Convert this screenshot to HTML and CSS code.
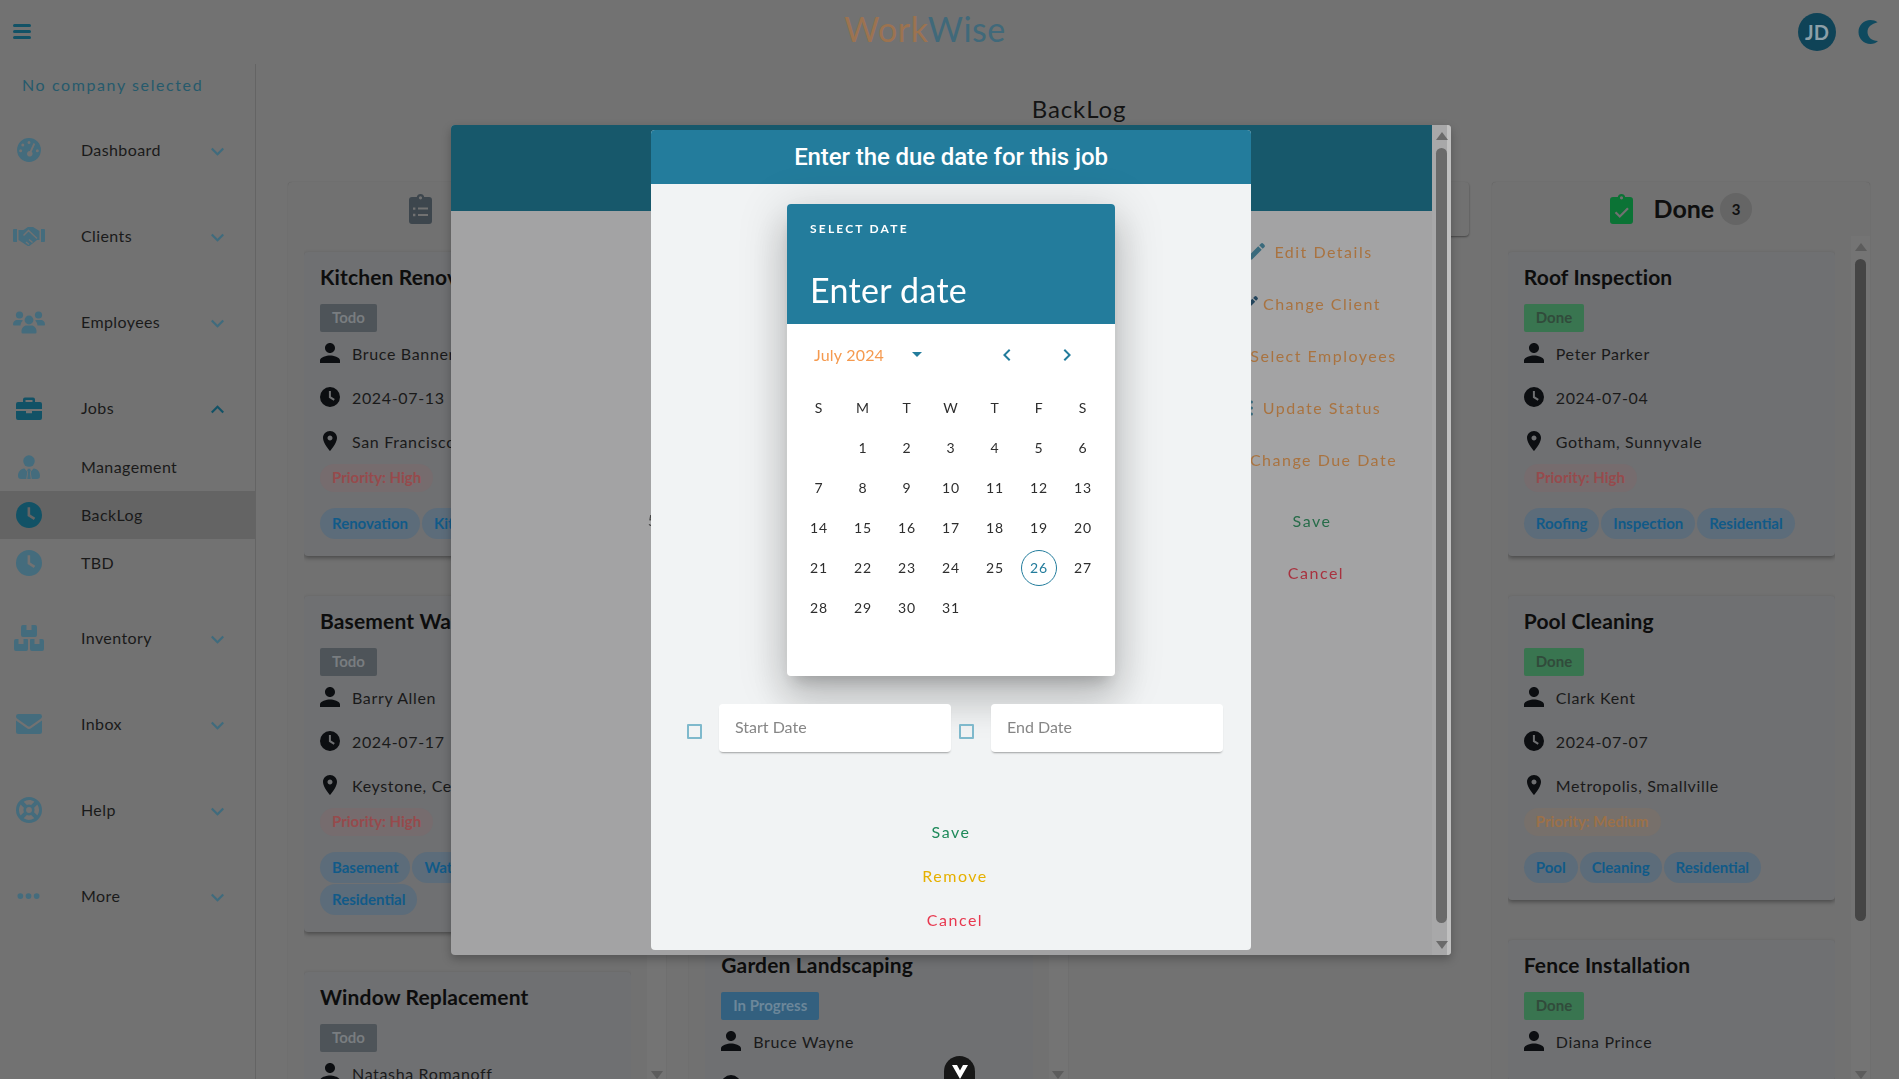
FILE: index.html

```html
<!DOCTYPE html>
<html lang="en">
<head>
  <meta charset="UTF-8" />
  <meta name="viewport" content="width=device-width, initial-scale=1.0" />
  <title>WorkWise - BackLog</title>
  <link rel="stylesheet" href="styles.css">
</head>
<body>
  <svg class="icon-defs" aria-hidden="true">
    <symbol id="i-person" viewBox="4 4 16 16"><path d="M12 12c2.21 0 4-1.79 4-4s-1.79-4-4-4-4 1.79-4 4 1.79 4 4 4zm0 2c-2.67 0-8 1.34-8 4v2h16v-2c0-2.66-5.33-4-8-4z"/></symbol>
    <symbol id="i-clock" viewBox="2 2 20 20"><path fill-rule="evenodd" d="M12 2a10 10 0 1 0 0 20 10 10 0 0 0 0-20zM10.900 6h2v5.600l3.900 2.500-1.100 1.700-4.800-3z"/></symbol>
    <symbol id="i-pin" viewBox="2 2 20 20"><path d="M12 2C8.130 2 5 5.130 5 9c0 5.250 7 13 7 13s7-7.750 7-13c0-3.870-3.130-7-7-7zm0 9.500c-1.380 0-2.500-1.120-2.500-2.500s1.120-2.500 2.500-2.500 2.500 1.120 2.500 2.500-1.120 2.500-2.500 2.500z"/></symbol>
    <symbol id="i-chevron" viewBox="6 8 12 8"><path d="M7.410 8.590 12 13.170l4.590-4.580L18 10l-6 6-6-6z"/></symbol>
    <symbol id="i-gauge" viewBox="0 0 24 24"><path fill-rule="evenodd" d="M12 1a11 11 0 1 0 0 22 11 11 0 0 0 0-22zM12 3.600a1.400 1.400 0 1 1 0 2.800 1.400 1.400 0 0 1 0-2.800zM6.300 6a1.400 1.400 0 1 1 0 2.800 1.400 1.400 0 0 1 0-2.800zM4.300 11.200a1.400 1.400 0 1 1 0 2.800 1.400 1.400 0 0 1 0-2.800zM19.700 11.200a1.400 1.400 0 1 1 0 2.800 1.400 1.400 0 0 1 0-2.800zM16.200 5.600l1.500.8-3.200 7.200a2.600 2.600 0 1 1-1.700-.7z"/></symbol>
    <symbol id="i-hands" viewBox="0 0 32 22"><path d="M1 4h3v13H1a1 1 0 0 1-1-1V5a1 1 0 0 1 1-1zM28 4h3a1 1 0 0 1 1 1v11a1 1 0 0 1-1 1h-3z"/><path d="M5.500 5h5l4.500-3h5l6.500 4v9h-2.500l-7 5.500a2.500 2.500 0 0 1-3 0L5.500 15z"/><path d="M10.500 10.500 15.500 5.500 24 13.500M13 17l3 2.500M16 14.500l3.500 3" fill="none" stroke="#727272" stroke-width="1.500"/></symbol>
    <symbol id="i-users" viewBox="0 0 32 24"><circle cx="6.500" cy="5" r="3.600"/><circle cx="25.500" cy="5" r="3.600"/><circle cx="16" cy="10" r="4.400"/><path d="M0 14.500C0 11.500 2 10 4 10h4c.8 0 1.400.2 2 .6-1.600 1.300-2.400 2.800-2.500 4.900H1a1 1 0 0 1-1-1zM32 14.500c0-3-2-4.500-4-4.500h-4c-.8 0-1.400.2-2 .6 1.600 1.300 2.400 2.800 2.500 4.900H31a1 1 0 0 0 1-1zM8.500 21c0-3 2.500-5.500 5-5.500h5c2.500 0 5 2.500 5 5.500v1.200a1.300 1.300 0 0 1-1.300 1.300H9.800a1.300 1.300 0 0 1-1.300-1.300z"/></symbol>
    <symbol id="i-case" viewBox="0 0 26 24"><path d="M9 1.500h8a2 2 0 0 1 2 2V6h5a2 2 0 0 1 2 2v5H0V8a2 2 0 0 1 2-2h5V3.500a2 2 0 0 1 2-2zM9.500 4v2h7V4zM0 15h10v2.200h6V15h10v7a2 2 0 0 1-2 2H2a2 2 0 0 1-2-2z"/></symbol>
    <symbol id="i-tie" viewBox="0 0 24 26"><circle cx="12" cy="6.500" r="6.300"/><path d="M3.500 26A3.500 3.500 0 0 1 0 22.500c0-4 2.500-7.500 7-8l3.200 3.800-1.200 7.700zM20.500 26a3.500 3.500 0 0 0 3.500-3.500c0-4-2.500-7.500-7-8l-3.200 3.800 1.200 7.700zM10.800 15h2.400l.8 2-1 1.300.9 7.700h-3.800l.9-7.700-1-1.300z"/></symbol>
    <symbol id="i-boxes" viewBox="0 0 30 26"><path d="M9 0h3.500v5h5V0H21a2 2 0 0 1 2 2v8a2 2 0 0 1-2 2H9a2 2 0 0 1-2-2V2a2 2 0 0 1 2-2zM2 14h2.500v5h5v-5H13a1 1 0 0 1 1 1v9a2 2 0 0 1-2 2H2a2 2 0 0 1-2-2v-8a2 2 0 0 1 2-2zM18 14h2.500v5h5v-5H28a2 2 0 0 1 2 2v8a2 2 0 0 1-2 2H18a2 2 0 0 1-2-2v-9a1 1 0 0 1 1-1z"/></symbol>
    <symbol id="i-mail" viewBox="0 0 26 20"><path d="M2.400 0h21.200A2.400 2.400 0 0 1 26 2.400c0 .8-.4 1.500-1 2L14.400 12a2.400 2.400 0 0 1-2.800 0L1 4.400a2.400 2.400 0 0 1-1-2A2.400 2.400 0 0 1 2.400 0zM0 6.500l10.600 7.600a4 4 0 0 0 4.800 0L26 6.500v11A2.500 2.500 0 0 1 23.500 20h-21A2.500 2.500 0 0 1 0 17.500z"/></symbol>
    <symbol id="i-ring" viewBox="0 0 24 24"><path fill-rule="evenodd" d="M12 0a12 12 0 1 0 0 24 12 12 0 0 0 0-24zM12 2.800c1.900 0 3.600.6 5 1.500l-3 3a5 5 0 0 0-4 0l-3-3a9.200 9.200 0 0 1 5-1.500zM4.300 7l3 3a5 5 0 0 0 0 4l-3 3a9.200 9.200 0 0 1 0-10zM19.700 7a9.200 9.200 0 0 1 0 10l-3-3a5 5 0 0 0 0-4zM12 9.300a2.700 2.700 0 1 1 0 5.400 2.700 2.700 0 0 1 0-5.400zM10 16.700a5 5 0 0 0 4 0l3 3a9.200 9.200 0 0 1-10 0z"/></symbol>
    <symbol id="i-dots" viewBox="0 0 24 6"><circle cx="3.500" cy="3" r="3"/><circle cx="12" cy="3" r="3"/><circle cx="20.500" cy="3" r="3"/></symbol>
    <symbol id="i-clip-list" viewBox="0 0 23 30"><path fill-rule="evenodd" d="M11.500 0a3.800 3.800 0 0 1 3.700 3H20a3 3 0 0 1 3 3v21a3 3 0 0 1-3 3H3a3 3 0 0 1-3-3V6a3 3 0 0 1 3-3h4.800a3.800 3.800 0 0 1 3.700-3zM11.500 2.200a1.600 1.600 0 1 0 0 3.200 1.600 1.600 0 0 0 0-3.200zM4 13.400v2.400h2.400v-2.400zM9 13.600v2h10v-2zM4 19.800v2.400h2.400v-2.400zM9 20v2h10v-2z"/></symbol>
    <symbol id="i-clip-check" viewBox="0 0 23 30"><path fill-rule="evenodd" d="M11.500 0a3.800 3.800 0 0 1 3.700 3H20a3 3 0 0 1 3 3v21a3 3 0 0 1-3 3H3a3 3 0 0 1-3-3V6a3 3 0 0 1 3-3h4.800a3.800 3.800 0 0 1 3.700-3zM11.500 2.200a1.600 1.600 0 1 0 0 3.200 1.600 1.600 0 0 0 0-3.200zM17.200 13.500l-7.400 7.400-3.500-3.500-1.600 1.600 5.100 5.100 9-9z"/></symbol>
    <symbol id="i-pencil" viewBox="0 0 18 18"><path d="M13.800.7a1.800 1.800 0 0 1 2.500 0l1 1a1.800 1.800 0 0 1 0 2.500L15.700 5.800 12.200 2.300zM11.200 3.300l3.500 3.500L5 16.500.4 17.600 1.500 13z"/></symbol>
    <symbol id="i-vdots" viewBox="0 0 10 16"><circle cx="8.500" cy="2" r="1.500"/><circle cx="8.500" cy="8" r="1.500"/><circle cx="8.500" cy="14" r="1.500"/></symbol>
  </svg>

  <header class="topbar">
    <button class="burger" aria-label="Menu"><span></span><span></span><span></span></button>
    <div class="logo"><span class="logo-work">Work</span><span class="logo-wise">Wise</span></div>
    <div class="topbar-right">
      <div class="avatar">JD</div>
      <svg class="moon" viewBox="0 0 20 24"><path d="M12.500 0C5.800 0 .5 5.400 .5 12s5.300 12 12 12c3 0 5.700-1.100 7.500-3-6.200 0-10.500-3.900-10.500-9S13.600 3.700 19.500 2.200C17.500.8 15.200 0 12.500 0z"/></svg>
    </div>
  </header>

  <div class="layout">
    <nav class="sidebar">
      <div class="company">No company selected</div>
      <a class="nav-item"><span class="nav-icon"><svg width="26" height="26"><use href="#i-gauge"/></svg></span>Dashboard<svg class="chevron"><use href="#i-chevron"/></svg></a>
      <a class="nav-item"><span class="nav-icon"><svg width="32" height="22"><use href="#i-hands"/></svg></span>Clients<svg class="chevron"><use href="#i-chevron"/></svg></a>
      <a class="nav-item"><span class="nav-icon"><svg width="32" height="24"><use href="#i-users"/></svg></span>Employees<svg class="chevron"><use href="#i-chevron"/></svg></a>
      <a class="nav-item is-open"><span class="nav-icon"><svg width="26" height="24"><use href="#i-case"/></svg></span>Jobs<svg class="chevron chevron-up"><use href="#i-chevron"/></svg></a>
      <div class="nav-sub">
        <a class="sub-item"><span class="nav-icon"><svg width="22" height="26"><use href="#i-tie"/></svg></span>Management</a>
        <a class="sub-item is-active"><span class="nav-icon"><svg width="26" height="26"><use href="#i-clock"/></svg></span>BackLog</a>
        <a class="sub-item"><span class="nav-icon"><svg width="26" height="26"><use href="#i-clock"/></svg></span>TBD</a>
      </div>
      <a class="nav-item"><span class="nav-icon"><svg width="30" height="26"><use href="#i-boxes"/></svg></span>Inventory<svg class="chevron"><use href="#i-chevron"/></svg></a>
      <a class="nav-item"><span class="nav-icon"><svg width="26" height="20"><use href="#i-mail"/></svg></span>Inbox<svg class="chevron"><use href="#i-chevron"/></svg></a>
      <a class="nav-item"><span class="nav-icon"><svg width="26" height="26"><use href="#i-ring"/></svg></span>Help<svg class="chevron"><use href="#i-chevron"/></svg></a>
      <a class="nav-item"><span class="nav-icon"><svg width="23" height="6"><use href="#i-dots"/></svg></span>More<svg class="chevron"><use href="#i-chevron"/></svg></a>
    </nav>

    <main class="main">
      <h2 class="page-title">BackLog</h2>
      <div class="board">

        <section class="column">
          <div class="column-head">
            <svg class="head-icon todo-icon"><use href="#i-clip-list"/></svg>
            <span class="head-title">Todo</span><span class="head-count">3</span>
          </div>
          <div class="column-body">
            <div class="card-list">
              <article class="card">
                <h4 class="card-title">Kitchen Renovation</h4>
                <div class="status status-todo">Todo</div>
                <div class="info"><svg class="info-icon"><use href="#i-person"/></svg>Bruce Banner</div>
                <div class="info"><svg class="info-icon"><use href="#i-clock"/></svg>2024-07-13</div>
                <div class="info"><svg class="info-icon"><use href="#i-pin"/></svg>San Francisco, Oakland</div>
                <div class="priority priority-high">Priority: High</div>
                <div class="tags"><span class="tag">Renovation</span><span class="tag">Kitchen</span><span class="tag">Residential</span></div>
              </article>
              <article class="card">
                <h4 class="card-title">Basement Waterproofing</h4>
                <div class="status status-todo">Todo</div>
                <div class="info"><svg class="info-icon"><use href="#i-person"/></svg>Barry Allen</div>
                <div class="info"><svg class="info-icon"><use href="#i-clock"/></svg>2024-07-17</div>
                <div class="info"><svg class="info-icon"><use href="#i-pin"/></svg>Keystone, Central City</div>
                <div class="priority priority-high">Priority: High</div>
                <div class="tags"><span class="tag">Basement</span><span class="tag">Waterproofing</span><span class="tag">Residential</span></div>
              </article>
              <article class="card">
                <h4 class="card-title">Window Replacement</h4>
                <div class="status status-todo">Todo</div>
                <div class="info"><svg class="info-icon"><use href="#i-person"/></svg>Natasha Romanoff</div>
              </article>
            </div>
            <div class="scrollbar"><i class="arrow-up"></i><i class="thumb"></i><i class="arrow-down"></i></div>
          </div>
        </section>

        <section class="column">
          <div class="column-head"></div>
          <div class="column-body">
            <div class="card-list">
              <article class="card card-covered"></article>
              <article class="card card-covered"></article>
              <article class="card">
                <h4 class="card-title">Garden Landscaping</h4>
                <div class="status status-progress">In Progress</div>
                <div class="info"><svg class="info-icon"><use href="#i-person"/></svg>Bruce Wayne</div>
                <div class="info"><svg class="info-icon"><use href="#i-clock"/></svg></div>
              </article>
            </div>
            <div class="scrollbar"><i class="arrow-up"></i><i class="thumb"></i><i class="arrow-down"></i></div>
          </div>
        </section>

        <section class="column column-empty">
          <div class="column-head"></div>
        </section>

        <section class="column">
          <div class="column-head">
            <svg class="head-icon done-icon"><use href="#i-clip-check"/></svg>
            <span class="head-title">Done</span><span class="head-count">3</span>
          </div>
          <div class="column-body">
            <div class="card-list">
              <article class="card">
                <h4 class="card-title">Roof Inspection</h4>
                <div class="status status-done">Done</div>
                <div class="info"><svg class="info-icon"><use href="#i-person"/></svg>Peter Parker</div>
                <div class="info"><svg class="info-icon"><use href="#i-clock"/></svg>2024-07-04</div>
                <div class="info"><svg class="info-icon"><use href="#i-pin"/></svg>Gotham, Sunnyvale</div>
                <div class="priority priority-high">Priority: High</div>
                <div class="tags"><span class="tag">Roofing</span><span class="tag">Inspection</span><span class="tag">Residential</span></div>
              </article>
              <article class="card">
                <h4 class="card-title">Pool Cleaning</h4>
                <div class="status status-done">Done</div>
                <div class="info"><svg class="info-icon"><use href="#i-person"/></svg>Clark Kent</div>
                <div class="info"><svg class="info-icon"><use href="#i-clock"/></svg>2024-07-07</div>
                <div class="info"><svg class="info-icon"><use href="#i-pin"/></svg>Metropolis, Smallville</div>
                <div class="priority priority-medium">Priority: Medium</div>
                <div class="tags"><span class="tag">Pool</span><span class="tag">Cleaning</span><span class="tag">Residential</span></div>
              </article>
              <article class="card">
                <h4 class="card-title">Fence Installation</h4>
                <div class="status status-done">Done</div>
                <div class="info"><svg class="info-icon"><use href="#i-person"/></svg>Diana Prince</div>
              </article>
            </div>
            <div class="scrollbar"><i class="arrow-up"></i><i class="thumb"></i><i class="arrow-down"></i></div>
          </div>
        </section>

      </div>
    </main>
  </div>

  <!-- job details dialog, dimmed by the date dialog on top of it -->
  <div class="backdrop">
    <div class="job-dialog">
      <div class="job-content">
        <div class="job-head"></div>
        <div class="job-body">
          <div class="job-left"><span class="job-fragment">5</span></div>
          <div class="job-actions">
            <a class="job-action job-action-icon"><svg class="action-icon action-edit"><use href="#i-pencil"/></svg>Edit Details</a>
            <a class="job-action"><svg class="action-icon action-client"><use href="#i-pencil"/></svg>Change Client</a>
            <a class="job-action job-action-icon"><svg class="action-icon action-edit"><use href="#i-person"/></svg>Select Employees</a>
            <a class="job-action"><svg class="action-icon action-dots"><use href="#i-vdots"/></svg>Update Status</a>
            <a class="job-action job-action-icon"><svg class="action-icon action-edit"><use href="#i-clock"/></svg>Change Due Date</a>
            <a class="job-action job-save">Save</a>
            <a class="job-action job-cancel">Cancel</a>
          </div>
        </div>
      </div>
      <div class="scrollbar job-scroll"><i class="arrow-up"></i><i class="thumb"></i><i class="arrow-down"></i></div>
    </div>
  </div>

  <div class="backdrop">
    <div class="date-dialog">
      <div class="date-dialog-head">Enter the due date for this job</div>
      <div class="date-dialog-body">
        <div class="picker">
          <div class="picker-head">
            <div class="picker-label">SELECT DATE</div>
            <div class="picker-value">Enter date</div>
          </div>
          <div class="picker-month">
            <span class="month-name">July 2024</span>
            <i class="month-caret"></i>
            <svg class="month-nav nav-prev"><use href="#i-chevron"/></svg>
            <svg class="month-nav nav-next"><use href="#i-chevron"/></svg>
          </div>
          <div class="week-row"><span>S</span><span>M</span><span>T</span><span>W</span><span>T</span><span>F</span><span>S</span></div>
          <div class="days">
            <span></span><span>1</span><span>2</span><span>3</span><span>4</span><span>5</span><span>6</span>
            <span>7</span><span>8</span><span>9</span><span>10</span><span>11</span><span>12</span><span>13</span>
            <span>14</span><span>15</span><span>16</span><span>17</span><span>18</span><span>19</span><span>20</span>
            <span>21</span><span>22</span><span>23</span><span>24</span><span>25</span><span class="today">26</span><span>27</span>
            <span>28</span><span>29</span><span>30</span><span>31</span>
          </div>
        </div>

        <div class="range-row">
          <i class="check"></i>
          <input class="range-input" type="text" placeholder="Start Date">
          <i class="check"></i>
          <input class="range-input" type="text" placeholder="End Date">
        </div>

        <a class="date-btn date-save">Save</a>
        <a class="date-btn date-remove">Remove</a>
        <a class="date-btn date-cancel">Cancel</a>
      </div>
    </div>
  </div>

  <div class="devtools-btn"><svg viewBox="0 0 16 14" width="16" height="14"><path d="M0 0h5l3 5.500L11 0h5L8 14z" fill="#fff"/></svg></div>
</body>
</html>
```

FILE: styles.css

```css
/* colours below are as seen through the dialog backdrops */
* { box-sizing: border-box; }
html, body { height: 100%; }
body { margin: 0; overflow: hidden; background: #727272; color: #1c1c1c; font-family: Lato, "Noto Sans", sans-serif; font-size: 16px; }
h2, h4 { margin: 0; }
svg { fill: currentColor; display: block; }
.icon-defs { width: 0; height: 0; position: absolute; }

.topbar { height: 64px; display: flex; align-items: center; justify-content: space-between; }
.burger { width: 52px; height: 64px; padding: 0 0 2px 13px; border: none; background: none; display: flex; flex-direction: column; justify-content: center; gap: 3px; }
.burger span { width: 18px; height: 3px; border-radius: 2px; background: #125266; }
.logo { font-size: 34px; margin-top: -8px; letter-spacing: 0.5px; }
.logo-work { color: #9c7350; }
.logo-wise { color: #40697a; }
.topbar-right { width: 101px; display: flex; align-items: center; }
.avatar { width: 38px; height: 38px; border-radius: 50%; background: #0f4357; color: #8d9fa7; display: flex; align-items: center; justify-content: center; font-size: 20px; font-weight: 700; }
.moon { width: 20px; height: 24px; margin-left: 22px; color: #0f4a5f; }

.layout { display: flex; height: calc(100vh - 64px); }
.sidebar { width: 256px; flex-shrink: 0; border-right: 1px solid #646464; }
.company { height: 51px; padding: 9px 0 0 22px; line-height: 24px; font-size: 16px; letter-spacing: 1.6px; color: #265a6c; }
.nav-item { height: 70px; padding-bottom: 2px; margin-bottom: 16px; display: flex; align-items: center; letter-spacing: 0.4px; color: #1a1a1a; }
.nav-item.is-open { margin-bottom: 0; }
.nav-sub { margin-bottom: 16px; }
.sub-item { height: 48px; padding-bottom: 2px; display: flex; align-items: center; letter-spacing: 0.4px; color: #1a1a1a; }
.sub-item.is-active { background: #646464; }
.nav-icon { width: 81px; padding-right: 24px; margin-top: 2px; flex-shrink: 0; display: flex; justify-content: center; color: #446c7d; }
.is-open .nav-icon, .is-active .nav-icon { color: #125266; }
.chevron { width: 13px; height: 9px; margin-left: auto; margin-right: 31px; margin-top: 4px; color: #3f6b7d; }
.chevron-up { transform: rotate(180deg); color: #125266; }

.main { flex: 1; padding: 29px 29px 0 32px; min-width: 0; }
.page-title { height: 32px; line-height: 32px; margin-bottom: 57px; text-align: center; font-size: 24px; font-weight: 400; letter-spacing: 0.9px; color: #141414; }
.board { display: grid; grid-template-columns: repeat(4, 1fr); gap: 23px; align-items: start; }
.column { background: #717171; border-radius: 4px; box-shadow: 0 0 1px rgba(0,0,0,0.25); height: 901px; }
.column-empty { height: 54px; box-shadow: 0 1px 2px rgba(0,0,0,0.4); }
.column-head { height: 54px; display: flex; align-items: center; justify-content: center; }
.head-icon { width: 23px; height: 30px; margin-right: 21px; }
.todo-icon { color: #3d464d; }
.done-icon { color: #0b7335; }
.head-title { font-size: 25px; font-weight: 700; padding-bottom: 2px; color: #0f0f0f; }
.head-count { width: 32px; height: 32px; margin-left: 6px; border-radius: 50%; background: #656565; display: flex; align-items: center; justify-content: center; font-size: 15px; font-weight: 700; color: #111; }
.column-body { display: flex; height: 847px; overflow: hidden; padding-left: 16px; }
.card-list { flex: 1; min-width: 0; padding-top: 16px; margin-right: 16px; overflow: hidden; }

.card { background: #6f7072; border-radius: 4px; padding: 14px 16px 17px; margin-bottom: 40px; box-shadow: 0 2px 4px rgba(0,0,0,0.35); }
.card-covered { height: 304px; }
.card-title { height: 24px; line-height: 22px; font-size: 21px; font-weight: 700; letter-spacing: 0.15px; color: #0d0d0d; white-space: nowrap; }
.status { display: inline-block; height: 28px; line-height: 27px; margin-top: 14px; padding: 0 12px; border-radius: 2px; font-size: 15px; font-weight: 700; vertical-align: top; }
.status-todo { background: #4e5459; color: #797d80; }
.status-progress { background: #33607f; color: #6c879a; }
.status-done { background: #397550; color: #314b3b; }
.info { height: 44px; padding-bottom: 2px; display: flex; align-items: center; letter-spacing: 0.65px; color: #1a1a1a; white-space: nowrap; }
.info-icon { width: 20px; height: 20px; margin-right: 12px; color: #0c0e11; flex-shrink: 0; }
.priority { display: inline-block; height: 28px; line-height: 27px; padding: 0 12px; border-radius: 14px; font-size: 15px; font-weight: 700; vertical-align: top; }
.priority-high { background: #766c6e; color: #964a4c; }
.priority-medium { background: #77706b; color: #9c7148; }
.tags { display: flex; flex-wrap: wrap; gap: 1px 2px; margin-top: 16px; }
.tag { height: 31px; line-height: 30px; padding: 0 12px; border-radius: 16px; background: #5c6c7a; color: #115a88; font-size: 15px; font-weight: 700; white-space: nowrap; }

.scrollbar { width: 19px; flex-shrink: 0; display: flex; flex-direction: column; align-items: center; background: #747474; }
.arrow-up { width: 0; height: 0; margin-top: 7px; border: 6px solid transparent; border-top: none; border-bottom: 8px solid #5c5c5c; }
.thumb { width: 11px; height: 662px; margin-top: 8px; border-radius: 6px; background: #454545; }
.arrow-down { width: 0; height: 0; margin-top: auto; margin-bottom: 4px; border: 6px solid transparent; border-bottom: none; border-top: 8px solid #5c5c5c; }

.backdrop { position: fixed; inset: 0; padding-left: 3px; display: flex; align-items: center; justify-content: center; }

.job-dialog { width: 1000px; height: 830px; display: flex; border-radius: 4px; overflow: hidden; background: #a3a3a4; box-shadow: 0 4px 10px rgba(0,0,0,0.25); }
.job-content { flex: 1; display: flex; flex-direction: column; min-width: 0; }
.job-head { height: 86px; background: #17586b; }
.job-body { flex: 1; display: flex; justify-content: space-between; }
.job-left { width: 206px; padding-top: 299px; text-align: right; color: #444; }
.job-actions { width: 240px; padding-top: 23px; display: flex; flex-direction: column; align-items: center; }
.job-action { height: 36px; margin-bottom: 16px; display: flex; align-items: center; letter-spacing: 1.5px; color: #a97340; white-space: nowrap; }
.job-action-icon { margin-right: 4px; }
.action-icon { width: 18px; height: 18px; color: #3a6a7c; flex-shrink: 0; }
.action-edit { margin-right: 9px; }
.action-client { width: 15px; height: 15px; margin-right: 5px; color: #24455c; }
.action-dots { width: 10px; height: 16px; margin-right: 10px; }
.job-save { margin-top: 9px; color: #276c49; }
.job-cancel { color: #a8323f; margin-left: 8px; }
.job-scroll { background: #a8a8a9; border-right: 4px solid #c0c0c0; align-items: flex-start; padding-left: 4px; }
.job-scroll .thumb { height: 775px; background: #6a6a6a; }
.job-scroll .arrow-up { border-bottom-color: #6a6a6a; }
.job-scroll .arrow-down { border-top-color: #6a6a6a; margin-bottom: 6px; }

.date-dialog { width: 600px; height: 820px; border-radius: 4px; overflow: hidden; background: #f1f3f4; }
.date-dialog-head { height: 54px; line-height: 54px; text-align: center; background: #237c9c; color: #fff; font-family: Roboto, sans-serif; font-size: 24px; font-weight: 500; letter-spacing: -0.1px; }
.date-dialog-body { padding-top: 20px; display: flex; flex-direction: column; align-items: center; }

.picker { width: 328px; height: 472px; border-radius: 4px; background: #fff; box-shadow: 0 11px 15px -7px rgba(0,0,0,0.2), 0 24px 38px 3px rgba(0,0,0,0.14), 0 9px 46px 8px rgba(0,0,0,0.12); overflow: hidden; }
.picker-head { height: 120px; padding: 17px 24px 0 23px; background: #237c9c; color: #fff; }
.picker-label { line-height: 16px; font-size: 12px; font-weight: 700; letter-spacing: 2.2px; }
.picker-value { margin-top: 31px; line-height: 44px; font-size: 34px; letter-spacing: 0.3px; }
.picker-month { height: 40px; margin-top: 11px; padding-left: 27px; display: flex; align-items: center; }
.month-name { width: 98px; color: #f59a4f; letter-spacing: 0.2px; }
.month-caret { width: 0; height: 0; border: 5px solid transparent; border-bottom: none; border-top-color: #237c9c; }
.month-nav { width: 12px; height: 8px; color: #237c9c; }
.nav-prev { transform: rotate(90deg); margin-left: 79px; }
.nav-next { transform: rotate(-90deg); margin-left: 48px; }
.week-row, .days { display: grid; grid-template-columns: repeat(7, 44px); padding-left: 10px; text-align: center; font-size: 14px; letter-spacing: 0.8px; color: #2e2e2e; }
.week-row { margin-top: 13px; height: 40px; line-height: 40px; }
.days { grid-auto-rows: 40px; line-height: 40px; }
.today { width: 36px; height: 36px; line-height: 34px; margin: 2px 4px; border: 1px solid #237c9c; border-radius: 50%; color: #237c9c; }

.range-row { margin-top: 28px; padding-left: 8px; width: 544px; display: flex; align-items: flex-start; }
.check { width: 15px; height: 15px; margin-top: 20px; margin-right: 17px; border: 2px solid #7fb9cc; border-radius: 1px; flex-shrink: 0; }
.range-input { width: 232px; height: 48px; margin-right: 8px; padding: 0 16px 2px; border: none; border-radius: 4px; background: #fff; box-shadow: 0 2px 2px -1px rgba(0,0,0,0.35); font-family: Lato, sans-serif; font-size: 16px; }
.range-input::placeholder { color: #868686; }

.date-btn { height: 36px; margin-bottom: 8px; display: flex; align-items: center; letter-spacing: 1.5px; }
.date-save { margin-top: 62px; color: #1f8a5a; }
.date-remove { margin-left: 8px; color: #e6b000; }
.date-cancel { margin-left: 8px; color: #e8384f; }

.devtools-btn { position: fixed; left: 944px; top: 1056px; width: 31px; height: 40px; border-radius: 16px; background: #171717; display: flex; justify-content: center; padding-top: 9px; }
```
